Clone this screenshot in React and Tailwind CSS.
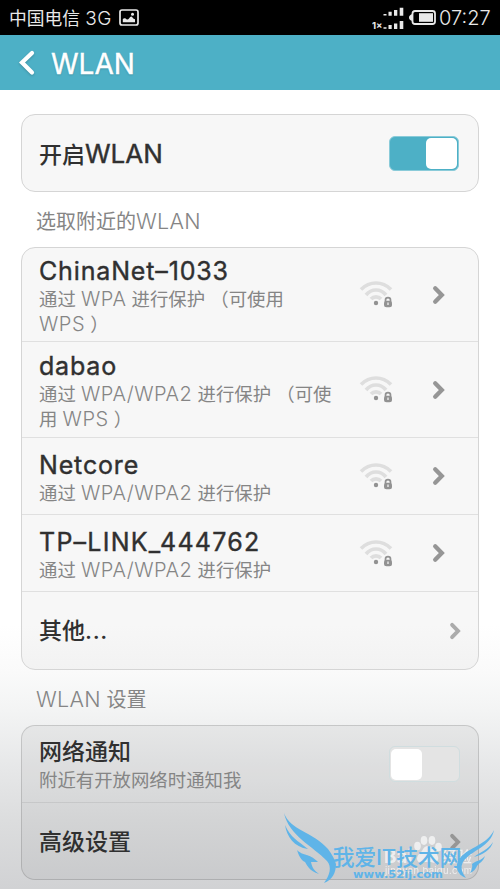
const NETWORKS = [
  { name: "ChinaNet–1033", note: ["通过 WPA 进行保护 （可使用", "WPS ）"], size: "h-[94px]", pad: "pt-[9px]", spacing: "tracking-[0.850px]" },
  { name: "dabao", note: ["通过 WPA/WPA2 进行保护 （可使", "用 WPS ）"], size: "h-[96px]", pad: "pt-[10px]", spacing: "tracking-[0.800px]" },
  { name: "Netcore", note: ["通过 WPA/WPA2 进行保护"], size: "h-[77px]", pad: "pt-[13px]", spacing: "tracking-[0.850px]" },
  { name: "TP–LINK_444762", note: ["通过 WPA/WPA2 进行保护"], size: "h-[77px]", pad: "pt-[13px]", spacing: "tracking-[1.250px]" },
];

// Latin runs are set slightly larger and lighter than the Chinese text around them.
function Mixed({ text, latin }) {
  return text.split(/([A-Z0-9/]+)/).map((part, i) =>
    i % 2 ? <span key={i} className={latin}>{part}</span> : part
  );
}

function Chevron({ className }) {
  return (
    <svg className={className} viewBox="0 0 14 20" fill="none" stroke="currentColor" strokeWidth="4.300" strokeLinecap="round" strokeLinejoin="miter">
      <path d="M3.200 3.200 L9.800 10 L3.200 16.800" />
    </svg>
  );
}

function WifiLocked() {
  return (
    <svg className="mb-px h-[28px] w-[34px] shrink-0" viewBox="0 0 34 28" fill="none">
      <g stroke="#dedede" strokeWidth="3.700">
        <path d="M2 9.500 Q8.500 3 17 3 Q25.500 3 32 9.500" />
        <path d="M7 15 Q11 10 17 10 Q23 10 27 15" />
        <path d="M12 19 Q14 16.800 17 16.800 Q20 16.800 22 19" />
      </g>
      <circle cx="17" cy="23" r="2.200" fill="#929292" />
      <path d="M26.500 22 V20 Q26.500 17.600 29 17.600 Q31.500 17.600 31.500 20 V22" stroke="#929292" strokeWidth="1.700" />
      <rect x="25" y="20.800" width="8" height="6.500" rx="2.500" fill="#929292" />
      <path d="M29 22.500 V25" stroke="#e5e5e5" strokeWidth="1.500" />
    </svg>
  );
}

function StatusBar() {
  return (
    <div className="flex h-[35px] items-center bg-black pl-[9px] pr-[8px] text-[#e9e9e9]">
      <span className="whitespace-nowrap pt-px text-[17.800px] leading-[37px]">中国电信 <span className="text-[19px] font-light tracking-[0.600px]">3G</span></span>
      <svg className="ml-[7px] mb-px h-[17px] w-[20px] shrink-0" viewBox="0 0 20 17" fill="none">
        <rect x="1" y="1" width="18" height="15" rx="2" stroke="currentColor" strokeWidth="1.700" />
        <path d="M3.800 13.300 V10 Q5 8.800 6.300 9.300 Q8.500 11.800 10 9.500 Q12 6.300 13.500 8.500 Q14.500 10 16 10.200 V13.300 Z" fill="currentColor" />
        <circle cx="13.500" cy="5.200" r="1.500" fill="currentColor" />
      </svg>
      <svg className="ml-auto h-[24px] w-[32px] shrink-0" viewBox="0 0 32 24" fill="currentColor">
        <path d="M11.500 8h3v1.500h-3zM16.500 5.700h3.200v4h-3.200zM22 4h3.300v5.700H22zM27.700 1.700h3.600v8h-3.600zM11.500 21.300h3v1.500h-3zM16.500 19h3.200v4h-3.200zM22 17.500h3.300v5.500H22zM27.700 15h3.600v8h-3.600z" />
        <text x="0" y="22.500" fontSize="9.500" fontWeight="700">1×</text>
      </svg>
      <svg className="ml-[5px] h-[15px] w-[27px] shrink-0" viewBox="0 0 27 15" fill="none">
        <path d="M6 1 H23.500 Q26 1 26 3.500 V11.500 Q26 14 23.500 14 H6 Q3.500 14 3.500 11.500 V3.500 Q3.500 1 6 1 Z" stroke="currentColor" strokeWidth="1.800" />
        <path d="M3.500 4 Q0 5 0 7.500 Q0 10 3.500 11 Z" fill="currentColor" />
        <rect x="10" y="3.200" width="14" height="8.600" fill="currentColor" />
      </svg>
      <span className="ml-[3px] w-[53px] whitespace-nowrap pt-[2px] text-[20px] font-light leading-[37px]">07:27</span>
    </div>
  );
}

function Watermarks() {
  return (
    <svg className="pointer-events-none absolute left-[270px] top-[805px] h-[84px] w-[230px]" viewBox="0 35 230 84">
      <g fill="#ffffff" opacity="0.65">
        <ellipse cx="147.500" cy="76" rx="3.300" ry="4.200" />
        <ellipse cx="154" cy="70.500" rx="3.300" ry="4.400" />
        <ellipse cx="162" cy="70.500" rx="3.300" ry="4.400" />
        <ellipse cx="168.500" cy="77" rx="3.300" ry="4.200" />
        <path d="M158 76 Q162 76 164 81 Q169 85 168 90 Q166 94 161 92 H154 Q148 94 147 89 Q147 85 152 81 Q154 76 158 76 Z" />
        <text x="114" y="93" fontSize="19" fontWeight="700">Bai</text>
        <text x="172" y="92" fontSize="15" fontWeight="500">经验</text>
        <text x="115" y="104" fontSize="9.500" textLength="87">jingyan.baidu.com</text>
      </g>
      <g fill="#5fb4e8">
        <path d="M14 43 C20 60 43 62 58 79 Q64 87 66 94 C66 103 62 110 54 113 C60 105 62 97 57 91 C43 76 19 66 14 43 Z" />
        <path d="M15 55 C21 68 27 70 38 79 C24 77 17 67 15 55 Z" />
        <path d="M27 80 C34 87 38 82 48 92 C44 92 42 92 41 92 C42 98 45 101 49 104 C39 101 37 95 35 92 C31 90 29 86 27 80 Z" />
        <path d="M224 60 C221 77 201 80 193 92 Q189 99 196 108 C187 105 184 96 190 88 C199 77 217 75 224 60 Z" />
        <path d="M223 72 C221 80 212 85 204 87 C210 82 218 80 223 72 Z" />
        <path d="M215 86 C213 92 209 93 207 96 Q205 101 200 103 Q203 98 202 94 C207 90 211 91 215 86 Z" />
        <text x="62.500" y="94.500" fontSize="22" fontWeight="500" textLength="129">我爱IT技术网</text>
        <text x="83" y="108" fontSize="11" fontWeight="700" fontFamily="'DejaVu Sans', sans-serif" textLength="90" lengthAdjust="spacingAndGlyphs">www.52ij.com</text>
      </g>
    </svg>
  );
}

const title = "text-[23px] font-medium text-[#303030]";
const caption = "relative top-px text-[18.400px] leading-[24.500px] text-[#858585] whitespace-nowrap";
const captionLatin = "text-[20px] font-light leading-none tracking-[0.500px]";
const sectionLabel = "mt-[13px] h-[32px] pl-[36px] text-[20px] leading-[32px] text-[#858585]";
const sectionLatin = "text-[21.500px] font-light tracking-[0.300px]";

export default function App() {
  return (
    <main className="relative h-[889px] w-[500px] overflow-hidden bg-[linear-gradient(180deg,#fff_0px,#fff_625px,#fafafa_672px,#f3f4f4_710px,#e7e8e9_765px,#dcddde_820px,#d1d2d4_889px)] font-[Inter,'Noto_Sans_CJK_SC',sans-serif]">
      <StatusBar />
      <header className="flex h-[55px] items-center bg-[#4db0c6] pl-[18px] text-white">
        <svg className="h-[26px] w-[18px] drop-shadow-[0_1px_1px_rgba(0,0,0,0.2)]" viewBox="0 0 18 26" fill="none" stroke="currentColor" strokeWidth="4.200" strokeLinecap="round">
          <path d="M14 3 L4 12.500 L14 22.500" />
        </svg>
        <h1 className="ml-[15px] pt-[3px] text-[28px] font-normal leading-[55px] [-webkit-text-stroke:0.4px_currentColor] [text-shadow:0_1px_2px_rgba(0,0,0,0.2)]">WLAN</h1>
      </header>

      <section className="mx-[21px] mt-[24px] flex h-[78px] items-center justify-between rounded-[14px] border border-[#d5d5d5] bg-[#f7f7f7] pl-[17px] pr-[19px]">
        <span className={title}>开启<span className="text-[26px] font-normal [-webkit-text-stroke:0.4px_currentColor]">WLAN</span></span>
        <div className="flex h-[35px] w-[70px] items-center justify-end rounded-[6px] border border-[#8acbd9] bg-[#4db0c6] pr-px">
          <div className="h-[31px] w-[31px] rounded-[5px] bg-white" />
        </div>
      </section>

      <h2 className={sectionLabel}><Mixed text="选取附近的WLAN" latin={sectionLatin} /></h2>

      <section className="mx-[21px] mt-[10px] h-[423px] rounded-[14px] border border-[#d5d5d5] bg-black/[0.032]">
        {NETWORKS.map((n) => (
          <div key={n.name} className={`flex items-center border-b border-[#e0e0e0] pl-[17px] ${n.size}`}>
            <div className={`w-[320px] self-start ${n.pad}`}>
              <div className={`text-[25px] font-normal leading-[29px] text-[#303030] [-webkit-text-stroke:0.4px_currentColor] ${n.spacing}`}>{n.name}</div>
              {n.note.map((line) => (
                <div key={line} className={caption}><Mixed text={line} latin={captionLatin} /></div>
              ))}
            </div>
            <WifiLocked />
            <Chevron className="ml-[39px] h-[20px] w-[14px] text-[#969696]" />
          </div>
        ))}
        <div className="flex h-[77px] items-center justify-between pl-[17px] pr-[16px]">
          <span className={`${title} pt-[2px]`}>其他<span className="tracking-[0.700px]">...</span></span>
          <Chevron className="h-[18px] w-[13px] text-[#ababab]" />
        </div>
      </section>

      <h2 className={sectionLabel}><Mixed text="WLAN 设置" latin={sectionLatin} /></h2>

      <section className="mx-[21px] mt-[10px] h-[155px] rounded-[14px] border border-black/[0.14] bg-black/[0.04]">
        <div className="flex h-[77px] items-center justify-between border-b border-black/[0.07] pl-[17px] pr-[18px]">
          <div className="pt-px">
            <div className={`${title} leading-[30px]`}>网络通知</div>
            <div className={caption}>附近有开放网络时通知我</div>
          </div>
          <div className="flex h-[36px] w-[71px] items-center rounded-[6px] border border-[#d0dddf] bg-[#e4e4e4] pl-px">
            <div className="h-[31px] w-[31px] rounded-[5px] bg-white" />
          </div>
        </div>
        <div className="flex h-[77px] items-center justify-between pl-[17px] pr-[16px]">
          <span className={`${title} pt-[2px]`}>高级设置</span>
          <Chevron className="h-[18px] w-[13px] text-[#969696]" />
        </div>
      </section>
      <Watermarks />
    </main>
  );
}
